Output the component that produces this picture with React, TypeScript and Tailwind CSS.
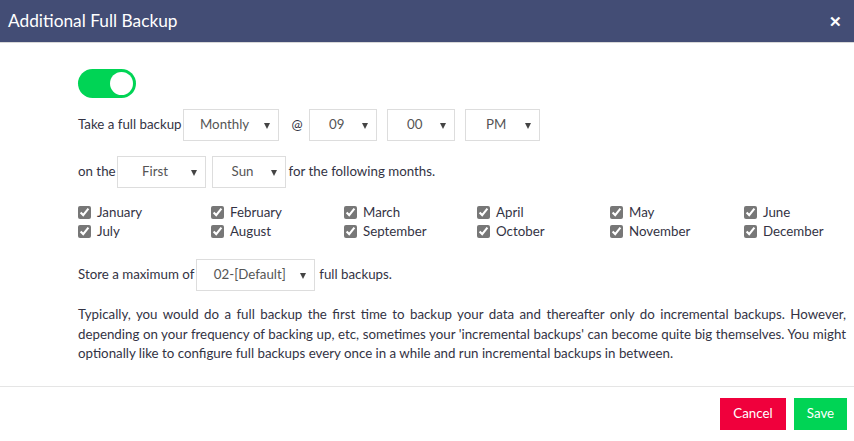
import { useState } from "react";

const MONTHS = [
  "January", "February", "March", "April", "May", "June",
  "July", "August", "September", "October", "November", "December",
];

function Select({ value, width }: { value: string; width: string }) {
  return (
    <div
      className={`relative flex h-[32px] items-center border border-[#ddd] bg-white text-[13.3px] text-[#555] ${width}`}
    >
      <span className="flex-1 text-center pr-[12px]">{value}</span>
      <span className="absolute right-[8px] top-[13px] h-0 w-0 border-x-[3px] border-t-[6px] border-x-transparent border-t-[#444]" />
    </div>
  );
}

export default function App() {
  const [on, setOn] = useState(true);
  return (
    <div
      className="flex h-[441px] w-[854px] flex-col bg-white text-[13.3px] text-[#333344]"
      style={{ fontFamily: "Lato, 'Open Sans', sans-serif" }}
    >
      <div className="flex h-[43px] items-center justify-between border-b border-[#d8d8d8] bg-[#434d75] pl-[8px] pr-[12px]">
        <h3 className="text-[17.3px] text-white">Additional Full Backup</h3>
        <span className="text-[15px] font-bold text-white">✕</span>
      </div>

      <div className="flex-1 pl-[78px] pr-[8px] pt-[26px]">
        <button
          onClick={() => setOn(!on)}
          className={`flex h-[29px] w-[58px] items-center rounded-full p-[3px] ${on ? "justify-end bg-[#00d455]" : "justify-start bg-[#ccc]"}`}
        >
          <span className="h-[23px] w-[23px] rounded-full bg-white" />
        </button>

        <div className="mt-[11px] flex items-center">
          <span className="mr-[1px]">Take a full backup</span>
          <Select value="Monthly" width="w-[96px]" />
          <span className="ml-[13px] mr-[6px]">@</span>
          <Select value="09" width="w-[68px]" />
          <span className="w-[10px]" />
          <Select value="00" width="w-[68px]" />
          <span className="w-[10px]" />
          <Select value="PM" width="w-[75px]" />
        </div>

        <div className="mt-[15px] flex items-center">
          <span className="mr-[1px]">on the</span>
          <Select value="First" width="w-[89px]" />
          <span className="w-[6px]" />
          <Select value="Sun" width="w-[74px]" />
          <span className="ml-[3px]">for the following months.</span>
        </div>

        <div className="mt-[16px] grid grid-cols-[133px_133px_133px_133px_134px_auto] gap-y-[2px]">
          {MONTHS.map((m) => (
            <label key={m} className="flex h-[17px] items-center">
              <input
                type="checkbox"
                defaultChecked
                className="mr-[6px] h-[13px] w-[13px] accent-[#777]"
              />
              <span>{m}</span>
            </label>
          ))}
        </div>

        <div className="mt-[19px] flex items-center">
          <span className="mr-[2px]">Store a maximum of</span>
          <Select value="02-[Default]" width="w-[119px]" />
          <span className="ml-[4px]">full backups.</span>
        </div>

        <p className="mt-[14px] text-justify leading-[19.5px]">
          Typically, you would do a full backup the first time to backup your data and thereafter only do
          incremental backups. However, depending on your frequency of backing up, etc, sometimes your
          'incremental backups' can become quite big themselves. You might optionally like to configure full
          backups every once in a while and run incremental backups in between.
        </p>
      </div>

      <div className="flex h-[55px] items-center justify-end gap-[8px] border-t border-[#e5e5e5] pr-[7px]">
        <button className="h-[32px] w-[66px] bg-[#f0003c] text-[13.3px] text-white">Cancel</button>
        <button className="h-[32px] w-[53px] bg-[#00d455] text-[13.3px] text-white">Save</button>
      </div>
    </div>
  );
}
